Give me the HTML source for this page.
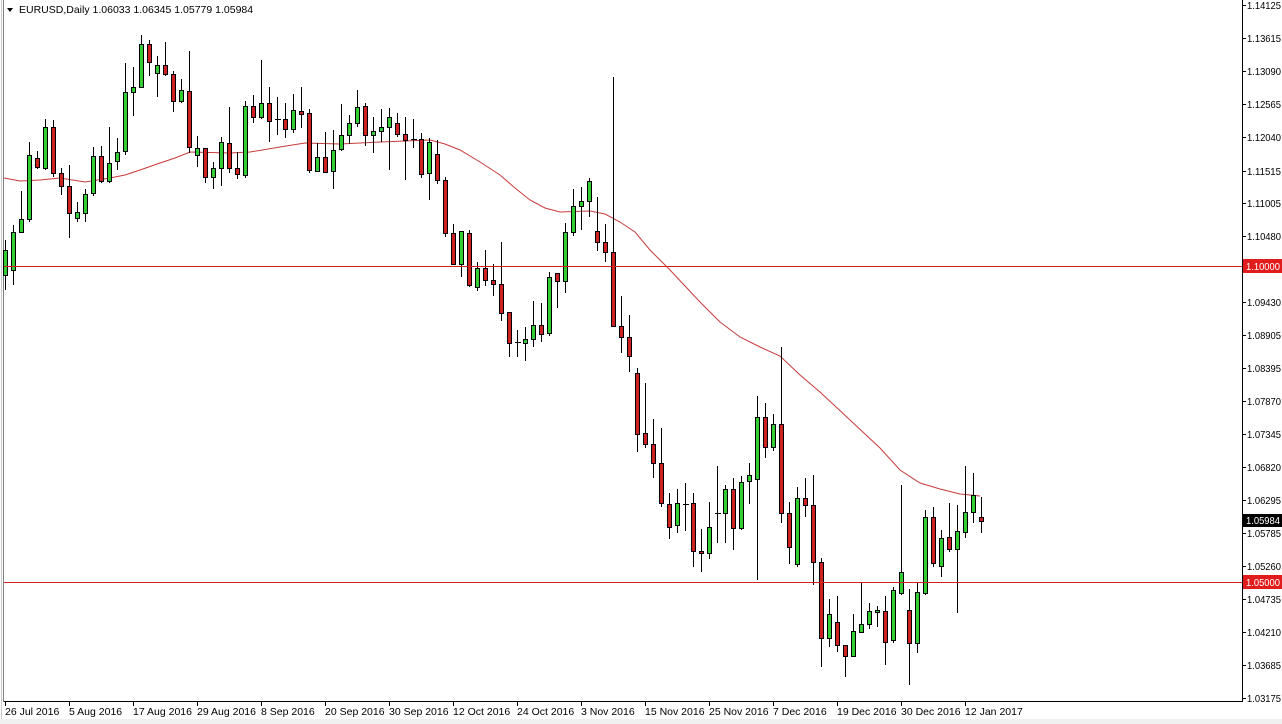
<!DOCTYPE html>
<html><head><meta charset="utf-8"><style>
html,body{margin:0;padding:0;background:#fff;width:1282px;height:724px;overflow:hidden}
svg{display:block}
text{font-family:"Liberation Sans","DejaVu Sans",sans-serif;font-size:10.5px;fill:#000}
.p{font-size:10.5px}
</style></head><body>
<svg width="1282" height="724" viewBox="0 0 1282 724" xmlns="http://www.w3.org/2000/svg">
<rect x="0" y="0" width="1282" height="724" fill="#fff"/>
<rect x="0" y="719" width="1282" height="5" fill="#f0f0f0"/>
<line x1="1.5" y1="0" x2="1.5" y2="719" stroke="#c8c8c8"/>
<line x1="3.5" y1="0" x2="3.5" y2="702" stroke="#808080"/>
<line x1="1242.5" y1="0" x2="1242.5" y2="702" stroke="#000"/>
<line x1="4" y1="701.5" x2="1243" y2="701.5" stroke="#000"/>
<polyline fill="none" stroke="#c83a3a" stroke-width="1" points="4,178 20,181 40,180 60,178 85,182 110,178 125,175 140,170 160,163 175,158 190,152 230,153 250,152 280,147 305,143 340,144 380,142 430,140 445,144 460,150 480,162 500,175 515,188 530,200 545,208 560,212 590,211 605,214 620,222 635,232 650,250 670,270 700,302 720,322 740,337 760,347 780,356 800,375 820,392 850,420 880,448 900,470 920,483 940,489 960,494 980,496"/>
<path fill="none" stroke="#000" stroke-width="1" d="M5.5 240V290M13.5 225V285M21.5 191V233M29.5 142V222M37.5 151V169M45.5 119V170M53.5 120V177M61.5 168V195M69.5 165V238M77.5 202V222M85.5 189V222M93.5 147V196M101.5 146V183M109.5 127V183M117.5 138V170M125.5 63V155M133.5 67V116M141.5 35V88M149.5 40V76M157.5 56V97M165.5 42V76M173.5 71V112M181.5 79V103M189.5 51V153M197.5 136V167M205.5 148V183M213.5 162V189M221.5 137V186M229.5 107V173M237.5 152V179M245.5 101V178M253.5 95V123M261.5 60V119M269.5 87V142M277.5 97V135M285.5 103V138M293.5 94V133M301.5 87V128M309.5 109V173M317.5 143V172M325.5 132V173M333.5 130V189M341.5 104V151M349.5 115V144M357.5 90V127M365.5 103V146M373.5 117V153M381.5 109V142M389.5 108V170M397.5 113V137M405.5 117V180M413.5 119V148M421.5 133V178M429.5 138V200M437.5 140V184M445.5 177V237M453.5 224V264M461.5 231V277M469.5 230V287M477.5 262V291M485.5 250V286M493.5 264V296M501.5 242V321M509.5 312V357M517.5 330V357M525.5 327V361M533.5 301V347M541.5 303V342M549.5 272V336M557.5 273V308M565.5 223V293M573.5 189V236M581.5 187V230M589.5 178V217M597.5 197V251M605.5 224V262M613.5 77V327M621.5 296V353M629.5 315V372M637.5 368V452M645.5 383V448M653.5 419V478M661.5 428V507M669.5 493V539M677.5 489V533M685.5 483V531M693.5 493V567M701.5 529V572M709.5 502V559M717.5 466V543M725.5 485V543M733.5 478V550M741.5 476V530M749.5 463V504M757.5 396V580M765.5 403V458M773.5 414V451M781.5 347V523M789.5 502V564M797.5 487V567M805.5 478V517M813.5 475V585M821.5 558V667M829.5 599V647M837.5 596V652M845.5 645V677M853.5 614V657M861.5 583V633M869.5 603V629M877.5 606V627M885.5 596V665M893.5 587V643M901.5 485V595M909.5 589V685M917.5 583V653M925.5 510V595M933.5 507V567M941.5 530V577M949.5 503V552M957.5 505V613M965.5 466V538M973.5 473V523M981.5 497V533"/>
<path fill="none" stroke="#000" stroke-width="1" d="M275 119.5H281M411 139.5H417M515 342.5H521M683 504.5H689M715 513.5H721"/>
<g fill="#32cd32" stroke="#000" stroke-width="1">
<rect x="3.5" y="250.5" width="4" height="25"/>
<rect x="11.5" y="232.5" width="4" height="38"/>
<rect x="19.5" y="219.5" width="4" height="13"/>
<rect x="27.5" y="155.5" width="4" height="64"/>
<rect x="43.5" y="127.5" width="4" height="41"/>
<rect x="75.5" y="212.5" width="4" height="6"/>
<rect x="83.5" y="194.5" width="4" height="19"/>
<rect x="91.5" y="156.5" width="4" height="37"/>
<rect x="107.5" y="163.5" width="4" height="18"/>
<rect x="115.5" y="152.5" width="4" height="9"/>
<rect x="123.5" y="92.5" width="4" height="59"/>
<rect x="131.5" y="87.5" width="4" height="5"/>
<rect x="139.5" y="44.5" width="4" height="43"/>
<rect x="155.5" y="65.5" width="4" height="8"/>
<rect x="179.5" y="90.5" width="4" height="11"/>
<rect x="195.5" y="148.5" width="4" height="7"/>
<rect x="211.5" y="168.5" width="4" height="9"/>
<rect x="219.5" y="142.5" width="4" height="26"/>
<rect x="243.5" y="106.5" width="4" height="69"/>
<rect x="259.5" y="103.5" width="4" height="14"/>
<rect x="291.5" y="110.5" width="4" height="19"/>
<rect x="315.5" y="157.5" width="4" height="14"/>
<rect x="331.5" y="150.5" width="4" height="21"/>
<rect x="339.5" y="135.5" width="4" height="14"/>
<rect x="347.5" y="123.5" width="4" height="12"/>
<rect x="355.5" y="107.5" width="4" height="16"/>
<rect x="371.5" y="131.5" width="4" height="4"/>
<rect x="379.5" y="127.5" width="4" height="4"/>
<rect x="387.5" y="117.5" width="4" height="10"/>
<rect x="427.5" y="142.5" width="4" height="31"/>
<rect x="459.5" y="231.5" width="4" height="33"/>
<rect x="475.5" y="268.5" width="4" height="19"/>
<rect x="523.5" y="339.5" width="4" height="4"/>
<rect x="531.5" y="325.5" width="4" height="14"/>
<rect x="547.5" y="277.5" width="4" height="56"/>
<rect x="563.5" y="232.5" width="4" height="49"/>
<rect x="571.5" y="206.5" width="4" height="26"/>
<rect x="579.5" y="201.5" width="4" height="5"/>
<rect x="587.5" y="181.5" width="4" height="20"/>
<rect x="675.5" y="503.5" width="4" height="22"/>
<rect x="707.5" y="527.5" width="4" height="26"/>
<rect x="723.5" y="489.5" width="4" height="24"/>
<rect x="739.5" y="482.5" width="4" height="46"/>
<rect x="747.5" y="475.5" width="4" height="6"/>
<rect x="755.5" y="417.5" width="4" height="62"/>
<rect x="771.5" y="424.5" width="4" height="23"/>
<rect x="795.5" y="498.5" width="4" height="66"/>
<rect x="827.5" y="614.5" width="4" height="24"/>
<rect x="851.5" y="631.5" width="4" height="25"/>
<rect x="859.5" y="624.5" width="4" height="8"/>
<rect x="867.5" y="611.5" width="4" height="13"/>
<rect x="875.5" y="610.5" width="4" height="2"/>
<rect x="891.5" y="590.5" width="4" height="50"/>
<rect x="899.5" y="572.5" width="4" height="21"/>
<rect x="915.5" y="592.5" width="4" height="51"/>
<rect x="923.5" y="517.5" width="4" height="76"/>
<rect x="939.5" y="538.5" width="4" height="28"/>
<rect x="955.5" y="531.5" width="4" height="18"/>
<rect x="963.5" y="512.5" width="4" height="20"/>
<rect x="971.5" y="495.5" width="4" height="17"/>
</g>
<g fill="#cc2222" stroke="#000" stroke-width="1">
<rect x="35.5" y="158.5" width="4" height="9"/>
<rect x="51.5" y="127.5" width="4" height="46"/>
<rect x="59.5" y="173.5" width="4" height="13"/>
<rect x="67.5" y="186.5" width="4" height="27"/>
<rect x="99.5" y="156.5" width="4" height="25"/>
<rect x="147.5" y="44.5" width="4" height="18"/>
<rect x="163.5" y="65.5" width="4" height="9"/>
<rect x="171.5" y="74.5" width="4" height="27"/>
<rect x="187.5" y="91.5" width="4" height="56"/>
<rect x="203.5" y="148.5" width="4" height="29"/>
<rect x="227.5" y="143.5" width="4" height="25"/>
<rect x="235.5" y="168.5" width="4" height="6"/>
<rect x="251.5" y="106.5" width="4" height="11"/>
<rect x="267.5" y="103.5" width="4" height="18"/>
<rect x="283.5" y="119.5" width="4" height="10"/>
<rect x="299.5" y="111.5" width="4" height="3"/>
<rect x="307.5" y="113.5" width="4" height="57"/>
<rect x="323.5" y="157.5" width="4" height="15"/>
<rect x="363.5" y="106.5" width="4" height="29"/>
<rect x="395.5" y="123.5" width="4" height="11"/>
<rect x="403.5" y="134.5" width="4" height="6"/>
<rect x="419.5" y="139.5" width="4" height="35"/>
<rect x="435.5" y="154.5" width="4" height="26"/>
<rect x="443.5" y="180.5" width="4" height="53"/>
<rect x="451.5" y="233.5" width="4" height="31"/>
<rect x="467.5" y="233.5" width="4" height="52"/>
<rect x="483.5" y="268.5" width="4" height="12"/>
<rect x="491.5" y="280.5" width="4" height="4"/>
<rect x="499.5" y="284.5" width="4" height="29"/>
<rect x="507.5" y="312.5" width="4" height="31"/>
<rect x="539.5" y="325.5" width="4" height="9"/>
<rect x="555.5" y="273.5" width="4" height="8"/>
<rect x="595.5" y="231.5" width="4" height="11"/>
<rect x="603.5" y="242.5" width="4" height="10"/>
<rect x="611.5" y="252.5" width="4" height="74"/>
<rect x="619.5" y="326.5" width="4" height="11"/>
<rect x="627.5" y="337.5" width="4" height="19"/>
<rect x="635.5" y="373.5" width="4" height="61"/>
<rect x="643.5" y="433.5" width="4" height="11"/>
<rect x="651.5" y="444.5" width="4" height="19"/>
<rect x="659.5" y="463.5" width="4" height="40"/>
<rect x="667.5" y="504.5" width="4" height="23"/>
<rect x="691.5" y="503.5" width="4" height="48"/>
<rect x="699.5" y="551.5" width="4" height="2"/>
<rect x="731.5" y="489.5" width="4" height="39"/>
<rect x="763.5" y="417.5" width="4" height="30"/>
<rect x="779.5" y="424.5" width="4" height="89"/>
<rect x="787.5" y="513.5" width="4" height="34"/>
<rect x="803.5" y="498.5" width="4" height="7"/>
<rect x="811.5" y="505.5" width="4" height="57"/>
<rect x="819.5" y="562.5" width="4" height="76"/>
<rect x="835.5" y="622.5" width="4" height="23"/>
<rect x="843.5" y="645.5" width="4" height="11"/>
<rect x="883.5" y="611.5" width="4" height="31"/>
<rect x="907.5" y="610.5" width="4" height="33"/>
<rect x="931.5" y="517.5" width="4" height="46"/>
<rect x="947.5" y="537.5" width="4" height="12"/>
<rect x="979.5" y="517.5" width="4" height="4"/>
</g>
<line x1="4" y1="266.5" x2="1242" y2="266.5" stroke="#d21e1e"/>
<line x1="4" y1="582.5" x2="1242" y2="582.5" stroke="#d21e1e"/>
<path d="M7 8H13L10 12Z" fill="#000"/>
<text x="19" y="13">EURUSD,Daily  1.06033 1.06345 1.05779 1.05984</text>
<path stroke="#000" d="M1243 5.5H1246M1243 38.5H1246M1243 71.5H1246M1243 104.5H1246M1243 137.5H1246M1243 171.5H1246M1243 203.5H1246M1243 236.5H1246M1243 302.5H1246M1243 335.5H1246M1243 368.5H1246M1243 401.5H1246M1243 434.5H1246M1243 467.5H1246M1243 500.5H1246M1243 533.5H1246M1243 566.5H1246M1243 599.5H1246M1243 632.5H1246M1243 665.5H1246M1243 698.5H1246"/>
<g>
<text x="1247" y="9" textLength="34" lengthAdjust="spacingAndGlyphs">1.14125</text>
<text x="1247" y="42" textLength="34" lengthAdjust="spacingAndGlyphs">1.13615</text>
<text x="1247" y="75" textLength="34" lengthAdjust="spacingAndGlyphs">1.13090</text>
<text x="1247" y="108" textLength="34" lengthAdjust="spacingAndGlyphs">1.12565</text>
<text x="1247" y="141" textLength="34" lengthAdjust="spacingAndGlyphs">1.12040</text>
<text x="1247" y="175" textLength="34" lengthAdjust="spacingAndGlyphs">1.11515</text>
<text x="1247" y="207" textLength="34" lengthAdjust="spacingAndGlyphs">1.11005</text>
<text x="1247" y="240" textLength="34" lengthAdjust="spacingAndGlyphs">1.10480</text>
<text x="1247" y="306" textLength="34" lengthAdjust="spacingAndGlyphs">1.09430</text>
<text x="1247" y="339" textLength="34" lengthAdjust="spacingAndGlyphs">1.08905</text>
<text x="1247" y="372" textLength="34" lengthAdjust="spacingAndGlyphs">1.08395</text>
<text x="1247" y="405" textLength="34" lengthAdjust="spacingAndGlyphs">1.07870</text>
<text x="1247" y="438" textLength="34" lengthAdjust="spacingAndGlyphs">1.07345</text>
<text x="1247" y="471" textLength="34" lengthAdjust="spacingAndGlyphs">1.06820</text>
<text x="1247" y="504" textLength="34" lengthAdjust="spacingAndGlyphs">1.06295</text>
<text x="1247" y="537" textLength="34" lengthAdjust="spacingAndGlyphs">1.05785</text>
<text x="1247" y="570" textLength="34" lengthAdjust="spacingAndGlyphs">1.05260</text>
<text x="1247" y="603" textLength="34" lengthAdjust="spacingAndGlyphs">1.04735</text>
<text x="1247" y="636" textLength="34" lengthAdjust="spacingAndGlyphs">1.04210</text>
<text x="1247" y="669" textLength="34" lengthAdjust="spacingAndGlyphs">1.03685</text>
<text x="1247" y="702" textLength="34" lengthAdjust="spacingAndGlyphs">1.03175</text>
</g>
<rect x="1243" y="259" width="39" height="14" fill="#e01c1c"/>
<text x="1246" y="270" textLength="34" lengthAdjust="spacingAndGlyphs" style="fill:#fff">1.10000</text>
<rect x="1243" y="514" width="39" height="13" fill="#000"/>
<text x="1246" y="524" textLength="34" lengthAdjust="spacingAndGlyphs" style="fill:#fff">1.05984</text>
<rect x="1243" y="575" width="39" height="14" fill="#e01c1c"/>
<text x="1246" y="586" textLength="34" lengthAdjust="spacingAndGlyphs" style="fill:#fff">1.05000</text>
<path stroke="#000" d="M5.5 702V706M69.5 702V706M133.5 702V706M197.5 702V706M261.5 702V706M325.5 702V706M389.5 702V706M453.5 702V706M517.5 702V706M581.5 702V706M645.5 702V706M709.5 702V706M773.5 702V706M837.5 702V706M901.5 702V706M965.5 702V706"/>
<g>
<text x="5" y="715">26 Jul 2016</text>
<text x="69" y="715">5 Aug 2016</text>
<text x="133" y="715">17 Aug 2016</text>
<text x="197" y="715">29 Aug 2016</text>
<text x="261" y="715">8 Sep 2016</text>
<text x="325" y="715">20 Sep 2016</text>
<text x="389" y="715">30 Sep 2016</text>
<text x="453" y="715">12 Oct 2016</text>
<text x="517" y="715">24 Oct 2016</text>
<text x="581" y="715">3 Nov 2016</text>
<text x="645" y="715">15 Nov 2016</text>
<text x="709" y="715">25 Nov 2016</text>
<text x="773" y="715">7 Dec 2016</text>
<text x="837" y="715">19 Dec 2016</text>
<text x="901" y="715">30 Dec 2016</text>
<text x="965" y="715">12 Jan 2017</text>
</g>
</svg>
</body></html>
